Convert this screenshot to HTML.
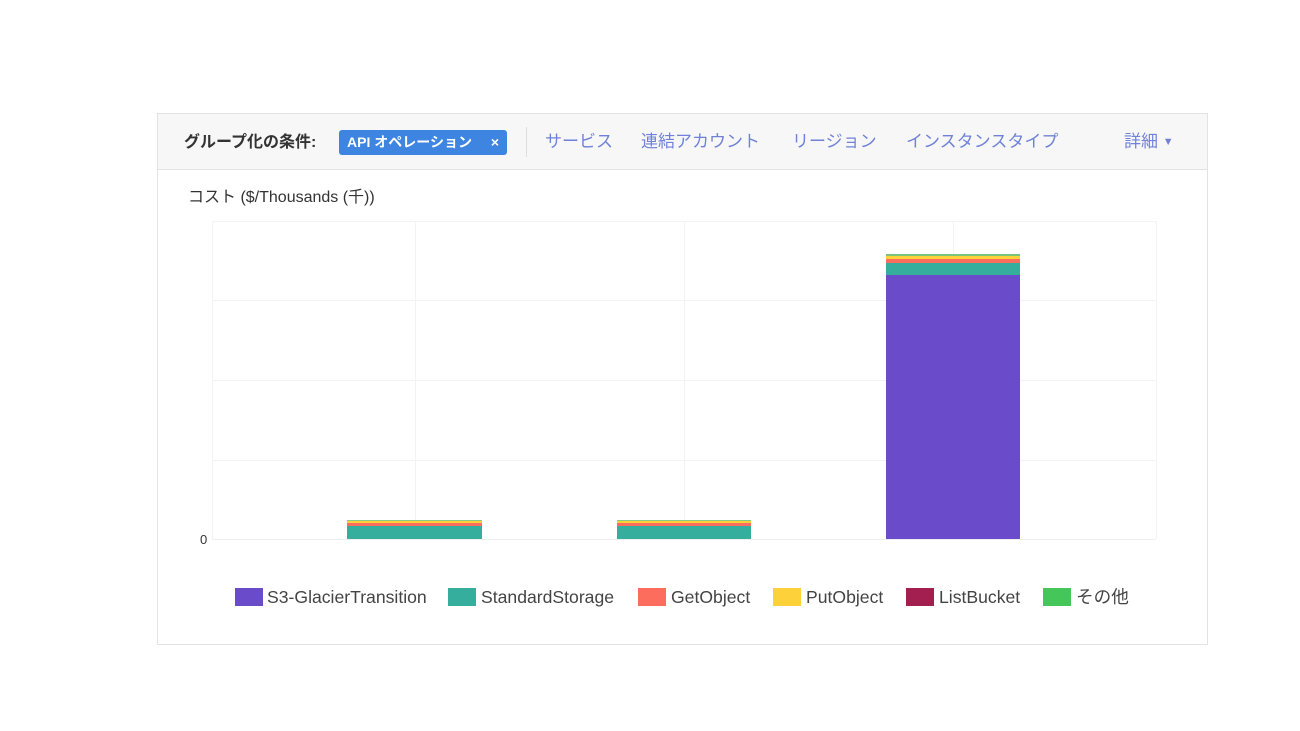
<!DOCTYPE html>
<html><head><meta charset="utf-8"><style>
*{margin:0;padding:0;box-sizing:border-box}
body{width:1300px;height:731px;background:#fff;position:relative;font-family:"Liberation Sans","Noto Sans CJK JP",sans-serif;overflow:hidden}
.a{position:absolute;white-space:nowrap;line-height:20px}
.panel{position:absolute;left:157px;top:113px;width:1051px;height:532px;border:1px solid #e3e3e3;background:#fff}
.hdr{position:absolute;left:158px;top:114px;width:1049px;height:56px;background:#f7f7f7;border-bottom:1px solid #e3e3e3}
.lk{color:#6f82d8;font-size:17px;top:132px}
.h{position:absolute;background:#f3f3f3;height:1px}
.v{position:absolute;background:#f3f3f3;width:1px}
.sw{position:absolute;top:588px;width:28px;height:18px}
.lg{position:absolute;top:587px;font-size:17.6px;line-height:20px;color:#444;white-space:nowrap}
</style></head><body>
<div class="panel"></div>
<div class="hdr"></div>
<div class="a" style="left:184px;top:133px;font-size:16px;font-weight:bold;color:#333">グループ化の条件:</div>
<div class="a" style="left:339px;top:130px;width:168px;height:25px;background:#3d85e0;border-radius:3px;color:#fff;font-size:14px;line-height:25px;padding-left:8px;font-weight:bold">API オペレーション <span style="position:absolute;right:8px">×</span></div>
<div class="a" style="left:526px;top:127px;width:1px;height:30px;background:#ddd"></div>
<div class="a lk" style="left:545px">サービス</div>
<div class="a lk" style="left:641px">連結アカウント</div>
<div class="a lk" style="left:792px">リージョン</div>
<div class="a lk" style="left:906px">インスタンスタイプ</div>
<div class="a lk" style="left:1124px">詳細 <span style="font-size:11px;position:relative;top:-2px">▼</span></div>
<div class="a" style="left:188px;top:188px;font-size:16px;color:#333">コスト ($/Thousands (千))</div>

<div class="h" style="left:212px;top:221px;width:944px"></div>
<div class="h" style="left:212px;top:300px;width:944px"></div>
<div class="h" style="left:212px;top:380px;width:944px"></div>
<div class="h" style="left:212px;top:460px;width:944px"></div>
<div class="h" style="left:212px;top:539px;width:944px;background:#eee"></div>
<div class="v" style="left:212px;top:221px;height:318px"></div>
<div class="v" style="left:415px;top:221px;height:318px"></div>
<div class="v" style="left:684px;top:221px;height:318px"></div>
<div class="v" style="left:953px;top:221px;height:318px"></div>
<div class="v" style="left:1156px;top:221px;height:318px"></div>
<div class="a" style="left:200px;top:530px;font-size:13px;color:#333">0</div>

<div class="a" style="left:347px;top:520px;width:135px;height:19px;background:linear-gradient(#8bc98b 0 1px,#fdd13a 1px 3px,#fd6d5d 3px 6px,#36ae9e 6px)"></div>
<div class="a" style="left:617px;top:520px;width:134px;height:19px;background:linear-gradient(#8bc98b 0 1px,#fdd13a 1px 3px,#fd6d5d 3px 6px,#36ae9e 6px)"></div>
<div class="a" style="left:886px;top:254px;width:134px;height:285px;background:linear-gradient(#7bc47b 0 2px,#fdd13a 2px 5px,#fd6d5d 5px 9px,#36ae9e 9px 21px,#6a4bc9 21px)"></div>

<div class="sw" style="left:235px;background:#6a4bc9"></div><div class="lg" style="left:267px">S3-GlacierTransition</div>
<div class="sw" style="left:448px;background:#36ae9e"></div><div class="lg" style="left:481px">StandardStorage</div>
<div class="sw" style="left:638px;background:#fd6d5d"></div><div class="lg" style="left:671px">GetObject</div>
<div class="sw" style="left:773px;background:#fdd13a"></div><div class="lg" style="left:806px">PutObject</div>
<div class="sw" style="left:906px;background:#a21f50"></div><div class="lg" style="left:939px">ListBucket</div>
<div class="sw" style="left:1043px;background:#45c658"></div><div class="lg" style="left:1076px">その他</div>
</body></html>
